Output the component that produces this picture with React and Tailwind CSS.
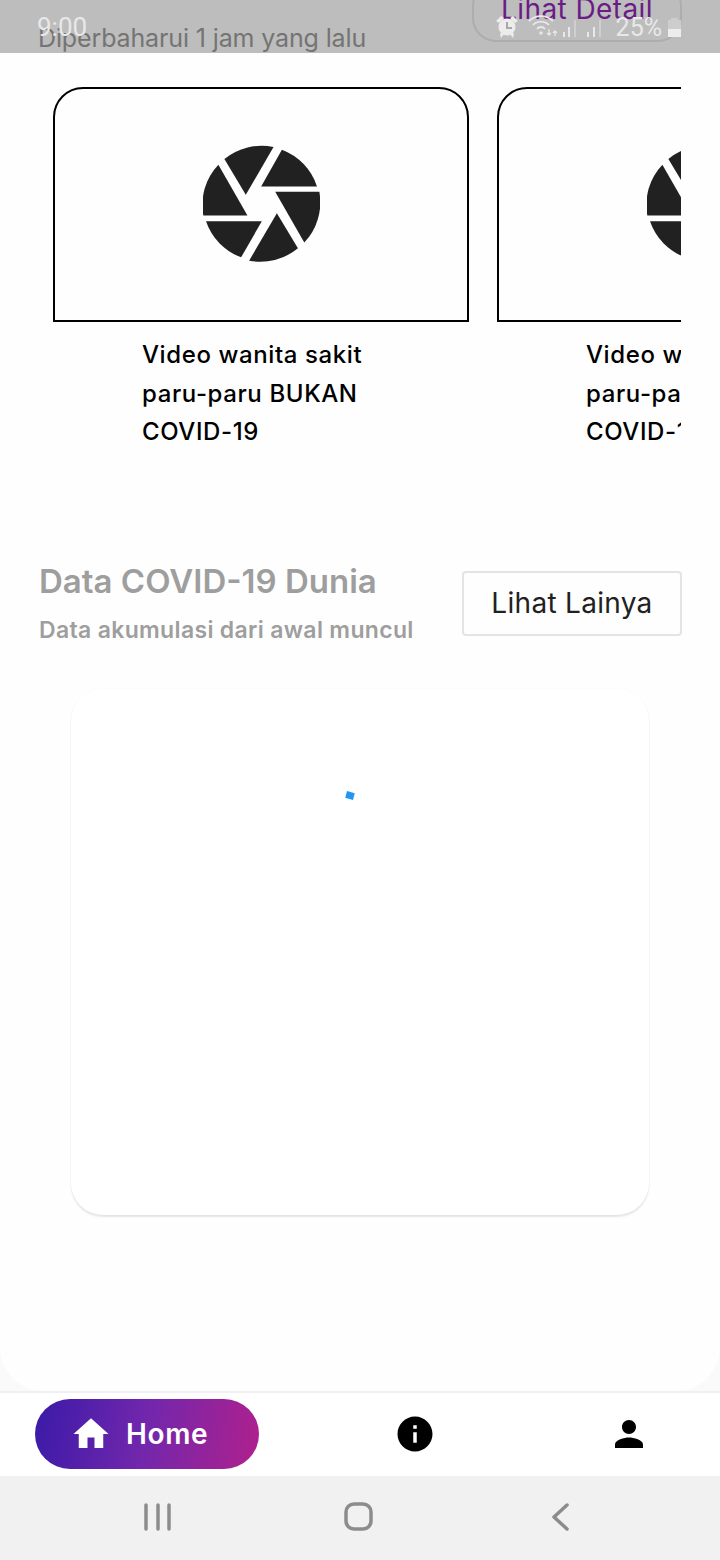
import React from "react";
import { MdHome, MdInfo, MdPerson } from "react-icons/md";

const font = { fontFamily: '"Inter", "Noto Sans", sans-serif' };

function Aperture() {
  return (
    <svg viewBox="69 46 350 350" className="w-[117px] h-[117px] -mt-[3px]" fill="#212121">
      <path d="M133 88A175 175 0 0 1 280 52L197 195Z" />
      <path d="M305 60A175 175 0 0 1 410 170H243Z" />
      <path d="M285 186H417A175 175 0 0 1 372 338Z" />
      <path d="M290 250L353 355A175 175 0 0 1 207 392Z" />
      <path d="M245 274L183 382A175 175 0 0 1 78 274Z" />
      <path d="M202 257H70A175 175 0 0 1 115 105Z" />
    </svg>
  );
}

function VideoCard() {
  return (
    <div className="w-[416px] shrink-0">
      <div className="h-[235px] border-2 border-black rounded-tl-[30px] rounded-tr-[30px] flex items-center justify-center">
        <Aperture />
      </div>
      <div className="pl-[89px] pt-[14px] text-[24px] leading-[38.5px] font-medium text-black tracking-[0.6px]">
        <div className="whitespace-nowrap">Video wanita sakit</div>
        <div className="whitespace-nowrap">paru-paru BUKAN</div>
        <div className="whitespace-nowrap">COVID-19</div>
      </div>
    </div>
  );
}

function StatusBar() {
  return (
    <div className="absolute top-0 left-0 w-[720px] h-[53px] flex justify-between pl-[37px] pr-[36px] text-[#e8e8e8]" style={{ fontFamily: '"Roboto", sans-serif' }}>
      <span className="text-[26px] leading-[55px]">9:00</span>
      <div className="flex items-start pt-[15px]">
        <svg width="24" height="24" viewBox="0 0 24 24" fill="#ececec">
          <circle cx="12" cy="12" r="8.500" />
          <path d="M1 6l5-5 3 2-5 5zM23 6l-5-5-3 2 5 5zM5 19l2-2 2 2-3 4zM19 19l-2-2-2 2 3 4z" />
          <path d="M11 7h2v5h4v2h-6z" fill="#a8a8a8" />
        </svg>
        <svg width="78" height="24" viewBox="0 0 78 24" fill="none" className="ml-[9px]">
          <path d="M1 6a17 17 0 0 1 24 0M5 10a11 11 0 0 1 16 0M9 14a5 5 0 0 1 8 0" stroke="#e8e8e8" strokeWidth="1.800" />
          <circle cx="13" cy="18" r="1.800" fill="#e8e8e8" />
          <path d="M21 14v6M19 18l2 2 2-2M27 21v-5M25 18l2-2 2 2" stroke="#e8e8e8" strokeWidth="1.300" />
          <path d="M35 17h2v5h-2zM40 12h2v10h-2z" fill="#e8e8e8" />
          <path d="M46 5h2v17h-2z" fill="#cfcfcf" />
          <path d="M59 17h2v5h-2zM65 12h2v10h-2z" fill="#e8e8e8" />
          <path d="M71 5h2v17h-2z" fill="#cfcfcf" />
        </svg>
        <span className="text-[25px] leading-[26px] ml-[10px]">25%</span>
        <svg width="15" height="24" viewBox="0 0 15 24" className="ml-[5px] mr-[2px]">
          <path d="M4 3h7v2h3v17H1V5h3z" fill="#cdcdcd" />
          <path d="M1 14h13v8H1z" fill="#ededed" />
        </svg>
      </div>
    </div>
  );
}

function SystemNav() {
  return (
    <div className="h-[84px] bg-[#f1f1f1] flex items-center justify-center relative">
      <svg width="720" height="84" viewBox="0 0 720 84" fill="none" stroke="#8c8c8c" strokeWidth="3.500" strokeLinecap="round" strokeLinejoin="round">
        <path d="M146 29v24M158 29v24M169 29v24" />
        <rect x="346" y="28" width="25" height="25" rx="8" />
        <path d="M567 29L554 41L567 53" />
      </svg>
    </div>
  );
}

export default function App() {
  return (
    <div className="relative w-[720px] h-[1560px] flex flex-col bg-[#fafafa] overflow-hidden" style={font}>
      <div className="h-[1391px] bg-[#fefefe] rounded-b-[44px] overflow-hidden flex flex-col">
        <div className="h-[53px] shrink-0 bg-[#bdbdbd] flex justify-between items-end overflow-hidden pl-[38px] pr-[38px]">
          <span className="text-[25px] leading-[30px] text-[#747474] whitespace-nowrap tracking-[-0.13px]">Diperbaharui 1 jam yang lalu</span>
          <div className="w-[210px] h-[60px] mb-[11px] shrink-0 rounded-[24px] border-2 border-[#adadad] flex items-end justify-center pb-[16px] text-[28px] leading-[30px] tracking-[0.4px] text-[#6a1b85]">
            Lihat Detail
          </div>
        </div>
        <div className="ml-[53px] w-[628px] mt-[34px] overflow-hidden flex gap-[28px]">
          <VideoCard />
          <VideoCard />
        </div>
        <div className="mt-[109px] pl-[39px] pr-[38px] flex justify-between items-start">
          <div>
            <div className="text-[33px] leading-[40px] font-semibold text-[#9e9e9e] whitespace-nowrap">Data COVID-19 Dunia</div>
            <div className="mt-[14px] text-[23px] leading-[30px] font-semibold tracking-[0.33px] text-[#9e9e9e] whitespace-nowrap">Data akumulasi dari awal muncul</div>
          </div>
          <div className="mt-[10px] w-[220px] h-[65px] border-2 border-[#e4e4e4] rounded-[4px] flex items-center justify-center text-[28px] tracking-[0.3px] text-[#212121]">
            Lihat Lainya
          </div>
        </div>
        <div className="mt-[44px] mx-[71px] h-[526px] bg-white rounded-[32px] shadow-[0_2px_2px_rgba(0,0,0,0.1),0_0_2px_rgba(0,0,0,0.03)] flex justify-center pt-[103px]">
          <div className="w-[8px] h-[7px] mr-[20px] bg-[#2196f3] rotate-[15deg]" />
        </div>
      </div>
      <div className="h-[85px] pb-[2px] border-t-2 border-[#f0f0f0] bg-white flex items-center pl-[35px]">
        <div className="w-[224px] h-[70px] rounded-[35px] bg-[linear-gradient(100deg,#3a1aa8_0%,#7327ac_50%,#b0208c_100%)] flex items-center pl-[35px] gap-[14px] text-white text-[28px] tracking-[0.6px] font-semibold">
          <MdHome size={42} className="shrink-0" />
          <span>Home</span>
        </div>
        <div className="ml-[135px] w-[42px] h-[42px] flex items-center justify-center">
          <MdInfo size={42} color="#000" />
        </div>
        <div className="ml-[172px] w-[42px] h-[42px] flex items-center justify-center">
          <MdPerson size={42} color="#000" />
        </div>
      </div>
      <SystemNav />
      <StatusBar />
    </div>
  );
}
